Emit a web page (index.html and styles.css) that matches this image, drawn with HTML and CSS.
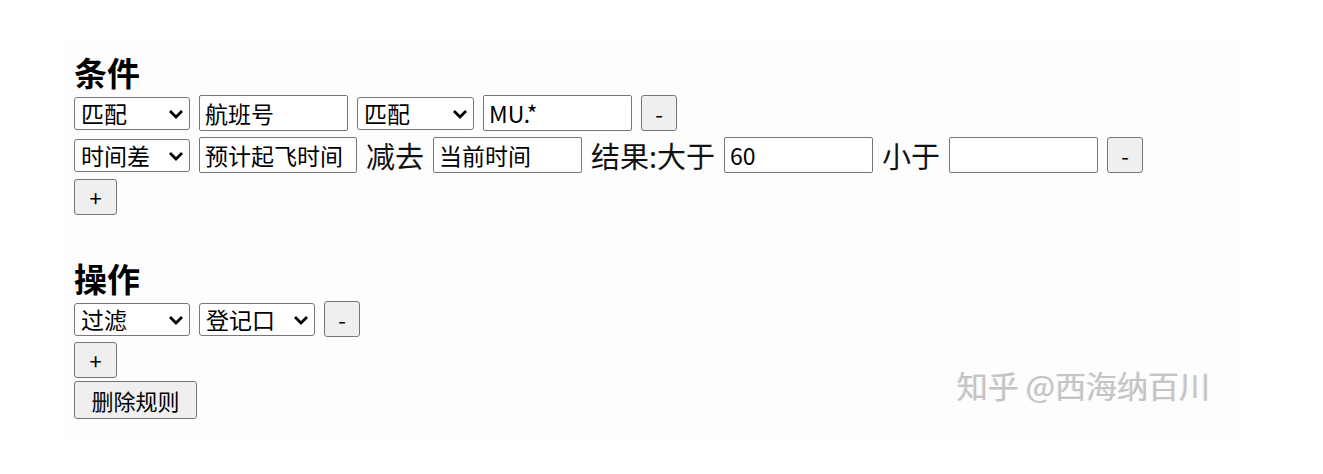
FILE: index.html
```html
<!DOCTYPE html>
<html lang="zh">
<head>
<meta charset="utf-8">
<title>规则</title>
<link rel="stylesheet" href="styles.css">
</head>
<body>
<div class="page">
  <h3 class="title">条件</h3>
  <div class="row">
    <span class="sel w116"><span class="sel-text">匹配</span><svg class="chev" viewBox="0 0 16 10"><path d="M2 2 L8 8 L14 2" fill="none" stroke="#000" stroke-width="2.8"/></svg></span>
    <span class="inp">航班号</span>
    <span class="sel w117"><span class="sel-text">匹配</span><svg class="chev" viewBox="0 0 16 10"><path d="M2 2 L8 8 L14 2" fill="none" stroke="#000" stroke-width="2.8"/></svg></span>
    <span class="inp">MU.*</span>
    <span class="btn sq">-</span>
  </div>
  <div class="row">
    <span class="sel w116"><span class="sel-text">时间差</span><svg class="chev" viewBox="0 0 16 10"><path d="M2 2 L8 8 L14 2" fill="none" stroke="#000" stroke-width="2.8"/></svg></span>
    <span class="inp wide">预计起飞时间</span>
    <span class="label">减去</span>
    <span class="inp">当前时间</span>
    <span class="label">结果:大于</span>
    <span class="inp">60</span>
    <span class="label">小于</span>
    <span class="inp"></span>
    <span class="btn sq">-</span>
  </div>
  <div class="row">
    <span class="btn plus">+</span>
  </div>

  <h3 class="title second">操作</h3>
  <div class="row">
    <span class="sel w116"><span class="sel-text">过滤</span><svg class="chev" viewBox="0 0 16 10"><path d="M2 2 L8 8 L14 2" fill="none" stroke="#000" stroke-width="2.8"/></svg></span>
    <span class="sel w116"><span class="sel-text">登记口</span><svg class="chev" viewBox="0 0 16 10"><path d="M2 2 L8 8 L14 2" fill="none" stroke="#000" stroke-width="2.8"/></svg></span>
    <span class="btn sq">-</span>
  </div>
  <div class="row short">
    <span class="btn plus">+</span>
  </div>
  <div class="row short">
    <span class="btn del">删除规则</span>
  </div>

  <div class="watermark">知乎 @西海纳百川</div>
</div>
</body>
</html>
```
FILE: styles.css
```css
html, body {
  margin: 0;
  padding: 0;
  background: #ffffff;
}
body {
  font-family: "Noto Sans CJK SC", "Noto Sans", "Liberation Sans", sans-serif;
  color: #000;
}
.page {
  position: relative;
  margin: 40px 0 0 64px;
  width: 1176px;
  height: 400px;
  padding-left: 10px;
  box-sizing: border-box;
  background: #fdfdfd;
}
.title {
  margin: 0;
  padding-top: 12px;
  font-size: 33px;
  line-height: 40px;
  height: 40px;
  font-weight: bold;
}
.title.second {
  padding-top: 40px;
}
.row {
  display: flex;
  align-items: center;
  gap: 9px;
  height: 42px;
}
.row.short {
  height: 40px;
}
.sel {
  position: relative;
  display: flex;
  align-items: center;
  height: 33px;
  box-sizing: border-box;
  border: 1px solid #767676;
  border-radius: 3px;
  background: #fff;
  padding-left: 6px;
  font-size: 23px;
  line-height: 1;
}
.w116 { width: 116px; }
.w117 { width: 117px; }
.chev {
  position: absolute;
  right: 5px;
  top: 11px;
  width: 16px;
  height: 10px;
}
.inp {
  display: flex;
  align-items: center;
  width: 149px;
  height: 36px;
  box-sizing: border-box;
  border: 1px solid #767676;
  border-radius: 2px;
  background: #fff;
  padding-left: 5px;
  font-size: 23px;
  white-space: nowrap;
  overflow: hidden;
}
.inp.wide {
  width: 158px;
}
.label {
  font-size: 29px;
  line-height: 36px;
  color: #111;
}
.btn {
  display: flex;
  align-items: center;
  justify-content: center;
  height: 36px;
  box-sizing: border-box;
  border: 1px solid #767676;
  border-radius: 3px;
  background: #efefef;
  font-size: 22px;
  color: #000;
}
.btn.sq {
  width: 36px;
}
.btn.plus {
  width: 43px;
}
.btn.del {
  width: 123px;
  height: 38px;
}
.watermark {
  position: absolute;
  left: 893px;
  top: 322px;
  font-size: 31px;
  color: #c4c4c4;
  text-shadow: 1px 1px 0 #fff, -1px 0 0 #e0e0e0;
}
```
